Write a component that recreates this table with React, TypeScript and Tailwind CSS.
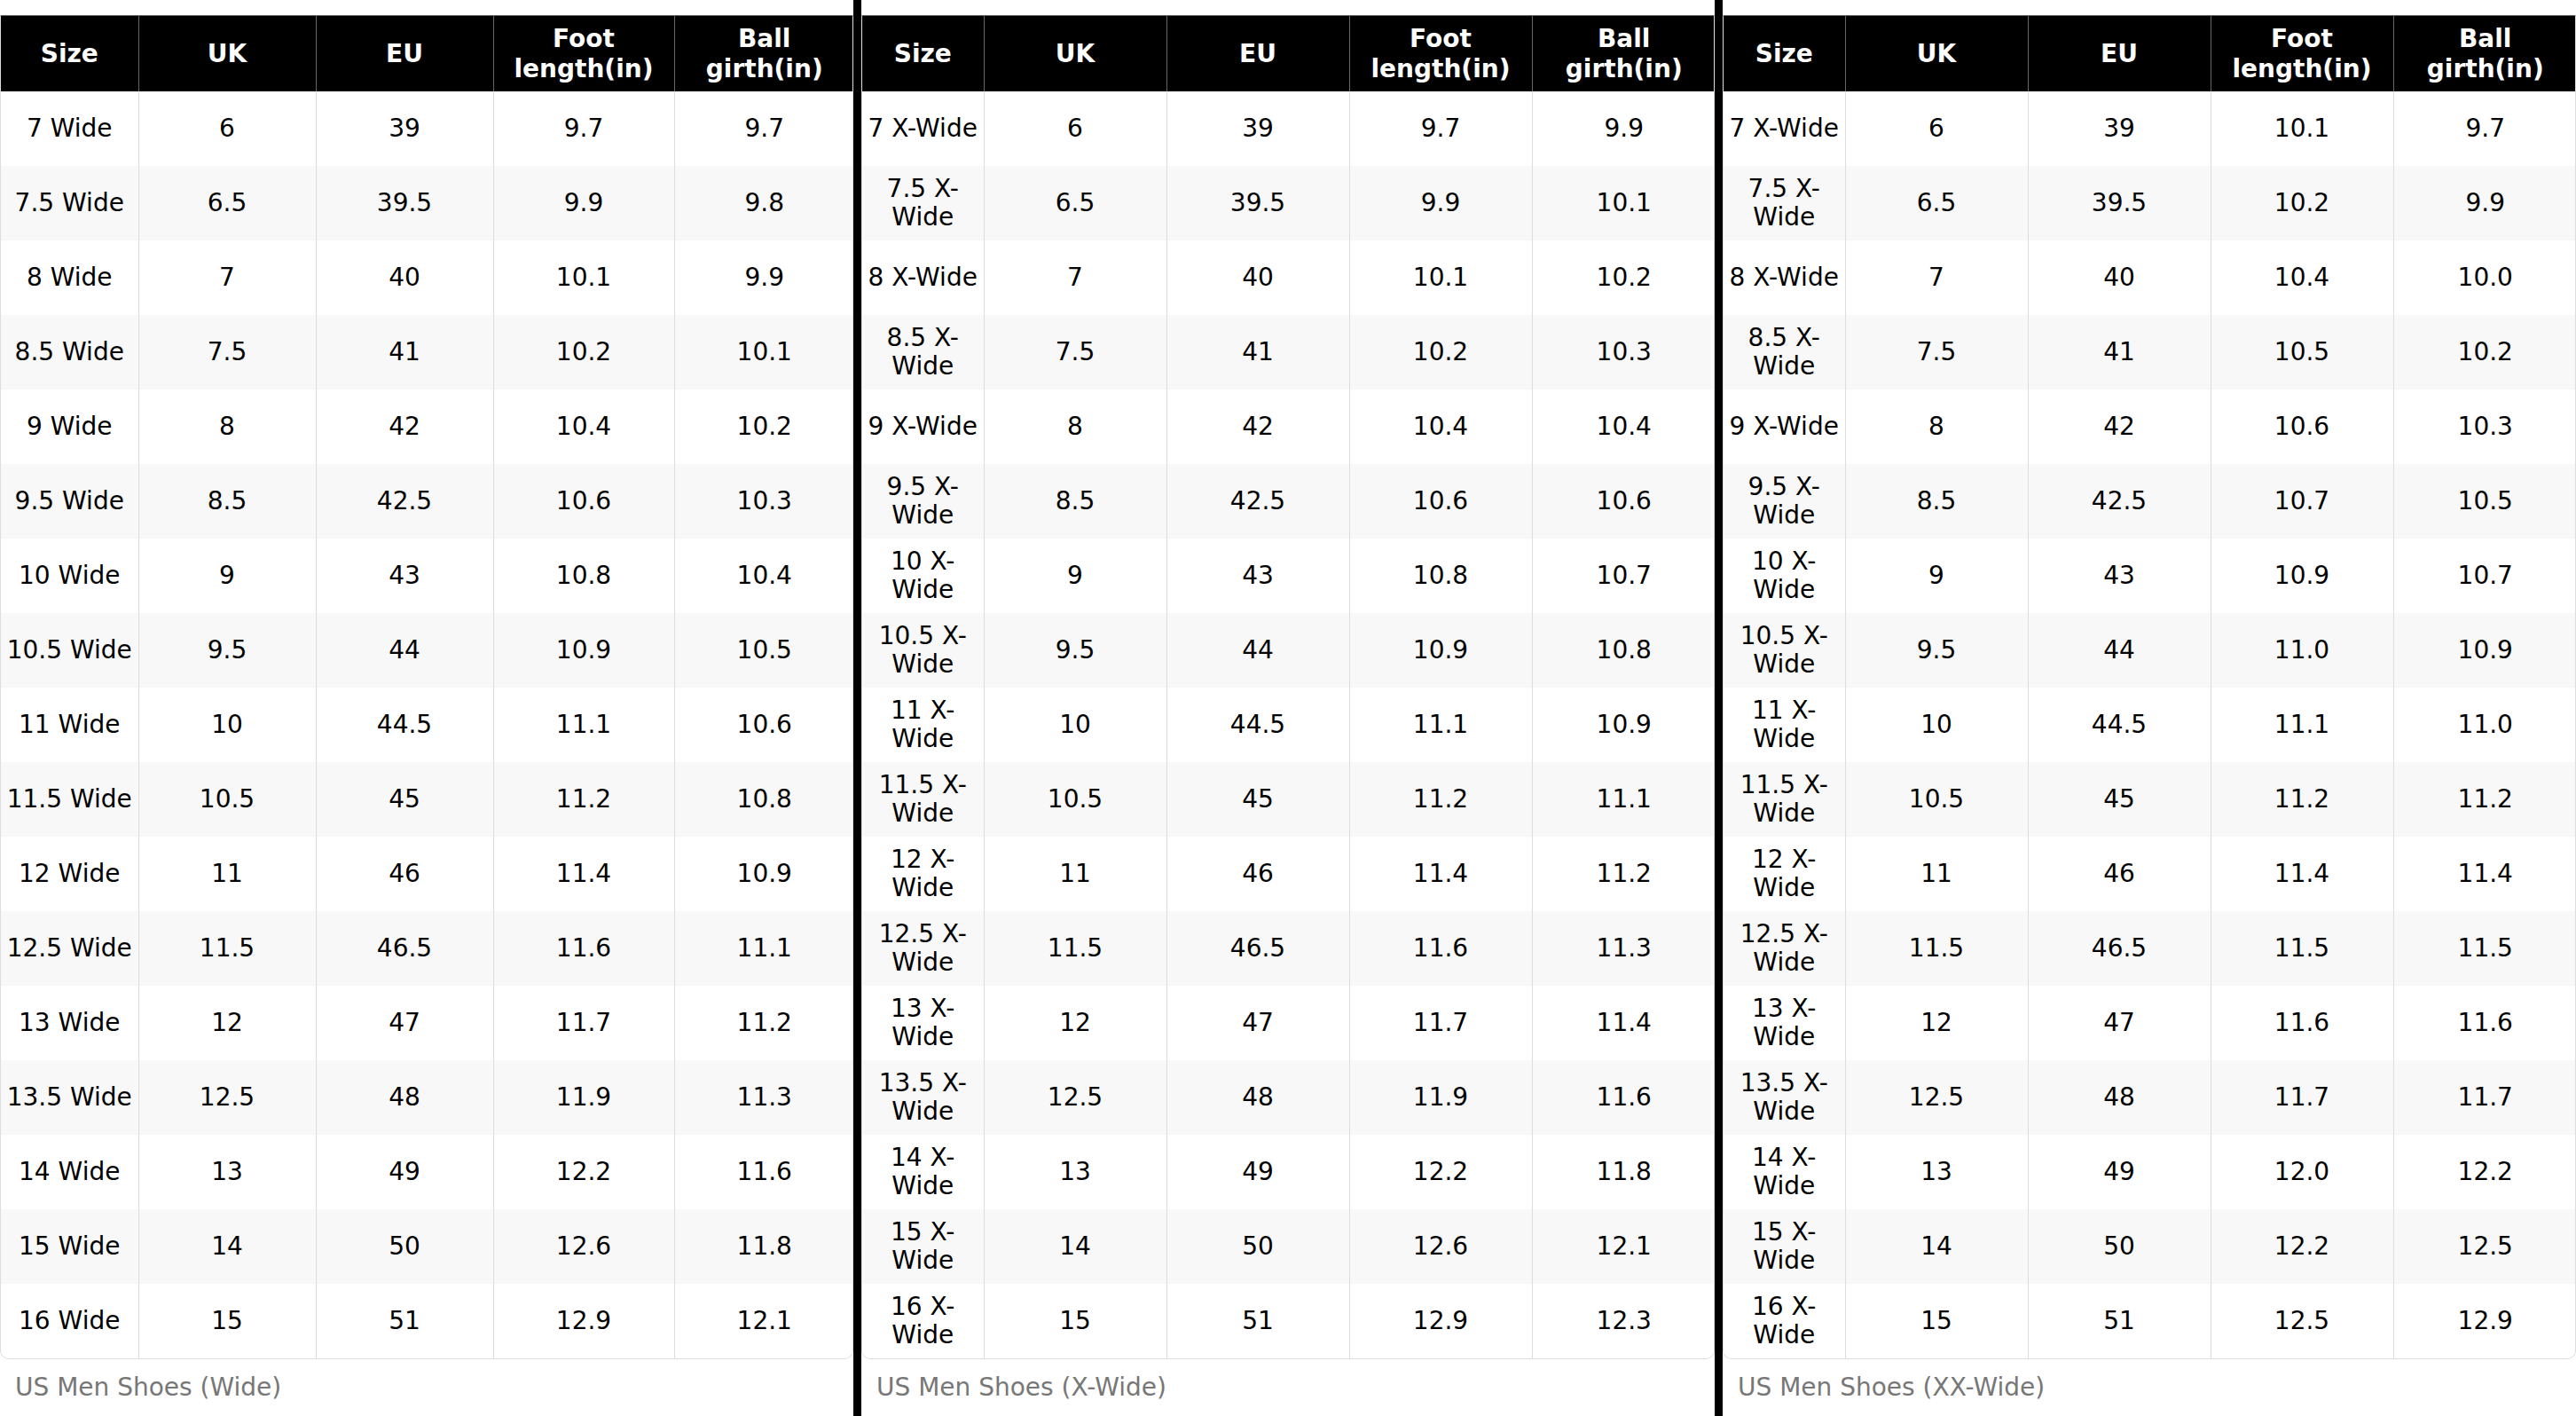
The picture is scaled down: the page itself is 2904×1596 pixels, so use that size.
type Row = [string, string, string, string, string];

const wide: Row[] = [
  ['7 Wide', '6', '39', '9.7', '9.7'],
  ['7.5 Wide', '6.5', '39.5', '9.9', '9.8'],
  ['8 Wide', '7', '40', '10.1', '9.9'],
  ['8.5 Wide', '7.5', '41', '10.2', '10.1'],
  ['9 Wide', '8', '42', '10.4', '10.2'],
  ['9.5 Wide', '8.5', '42.5', '10.6', '10.3'],
  ['10 Wide', '9', '43', '10.8', '10.4'],
  ['10.5 Wide', '9.5', '44', '10.9', '10.5'],
  ['11 Wide', '10', '44.5', '11.1', '10.6'],
  ['11.5 Wide', '10.5', '45', '11.2', '10.8'],
  ['12 Wide', '11', '46', '11.4', '10.9'],
  ['12.5 Wide', '11.5', '46.5', '11.6', '11.1'],
  ['13 Wide', '12', '47', '11.7', '11.2'],
  ['13.5 Wide', '12.5', '48', '11.9', '11.3'],
  ['14 Wide', '13', '49', '12.2', '11.6'],
  ['15 Wide', '14', '50', '12.6', '11.8'],
  ['16 Wide', '15', '51', '12.9', '12.1'],
];

const sizes = ['7', '7.5', '8', '8.5', '9', '9.5', '10', '10.5', '11', '11.5', '12', '12.5', '13', '13.5', '14', '15', '16'];
const uk = ['6', '6.5', '7', '7.5', '8', '8.5', '9', '9.5', '10', '10.5', '11', '11.5', '12', '12.5', '13', '14', '15'];
const eu = ['39', '39.5', '40', '41', '42', '42.5', '43', '44', '44.5', '45', '46', '46.5', '47', '48', '49', '50', '51'];

const xFoot = ['9.7', '9.9', '10.1', '10.2', '10.4', '10.6', '10.8', '10.9', '11.1', '11.2', '11.4', '11.6', '11.7', '11.9', '12.2', '12.6', '12.9'];
const xBall = ['9.9', '10.1', '10.2', '10.3', '10.4', '10.6', '10.7', '10.8', '10.9', '11.1', '11.2', '11.3', '11.4', '11.6', '11.8', '12.1', '12.3'];
const xxFoot = ['10.1', '10.2', '10.4', '10.5', '10.6', '10.7', '10.9', '11.0', '11.1', '11.2', '11.4', '11.5', '11.6', '11.7', '12.0', '12.2', '12.5'];
const xxBall = ['9.7', '9.9', '10.0', '10.2', '10.3', '10.5', '10.7', '10.9', '11.0', '11.2', '11.4', '11.5', '11.6', '11.7', '12.2', '12.5', '12.9'];

const xWide: Row[] = sizes.map((s, i) => [`${s} X-Wide`, uk[i], eu[i], xFoot[i], xBall[i]]);
const xxWide: Row[] = sizes.map((s, i) => [`${s} X-Wide`, uk[i], eu[i], xxFoot[i], xxBall[i]]);

const headers = ['Size', 'UK', 'EU', 'Foot length(in)', 'Ball girth(in)'];

function SizeTable({ rows, cols, caption }: { rows: Row[]; cols: number[]; caption: string }) {
  return (
    <div className="flex-1 min-w-0 flex flex-col pt-[17px]">
      <div className="border border-[#ddd] border-t-[#666] rounded-b-[10px] overflow-hidden">
        <table className="w-full table-fixed border-collapse text-center">
          <colgroup>
            {cols.map((w, i) => (
              <col key={i} style={{ width: w }} />
            ))}
          </colgroup>
          <thead>
            <tr className="h-[85px] bg-black text-white">
              {headers.map((h, i) => (
                <th
                  key={h}
                  className={`px-[5px] font-bold leading-[1.2] ${i > 0 ? 'border-l border-[#666]' : ''}`}
                >
                  {h}
                </th>
              ))}
            </tr>
          </thead>
          <tbody>
            {rows.map((r, ri) => (
              <tr key={ri} className={`h-[84px] ${ri % 2 === 1 ? 'bg-[#f8f8f8]' : 'bg-white'}`}>
                {r.map((c, ci) => (
                  <td
                    key={ci}
                    className={`px-[5px] leading-[1.15] text-black ${ci > 0 ? 'border-l border-[#ddd]' : ''}`}
                  >
                    {c}
                  </td>
                ))}
              </tr>
            ))}
          </tbody>
        </table>
      </div>
      <div className="h-[64px] flex items-center px-[17px] text-[#777]">{caption}</div>
    </div>
  );
}

export default function App() {
  return (
    <div
      className="w-[2904px] h-[1596px] flex bg-white text-[28px] overflow-hidden"
      style={{ fontFamily: '"DejaVu Sans", sans-serif' }}
    >
      <SizeTable rows={wide} cols={[155, 200, 200, 204, 203]} caption="US Men Shoes (Wide)" />
      <div className="w-[9px] shrink-0 bg-black" />
      <SizeTable rows={xWide} cols={[137, 206, 206, 206, 207]} caption="US Men Shoes (X-Wide)" />
      <div className="w-[9px] shrink-0 bg-black" />
      <SizeTable rows={xxWide} cols={[137, 206, 206, 206, 207]} caption="US Men Shoes (XX-Wide)" />
    </div>
  );
}
